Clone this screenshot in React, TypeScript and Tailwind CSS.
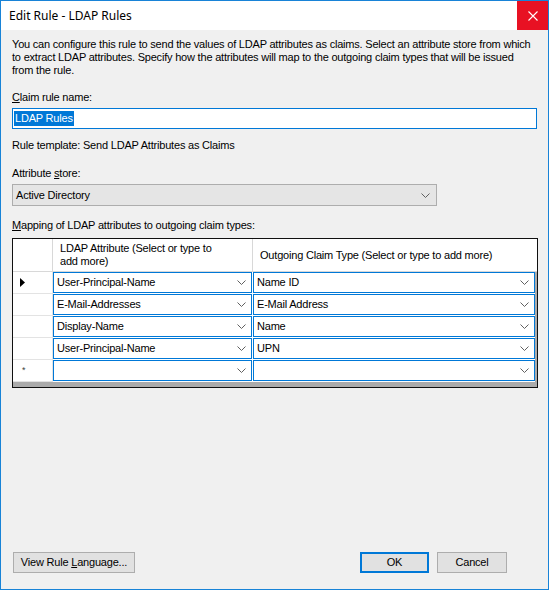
import React from "react";

const rows = [
  { attr: "User-Principal-Name", claim: "Name ID", marker: "arrow" },
  { attr: "E-Mail-Addresses", claim: "E-Mail Address", marker: "" },
  { attr: "Display-Name", claim: "Name", marker: "" },
  { attr: "User-Principal-Name", claim: "UPN", marker: "" },
  { attr: "", claim: "", marker: "star" },
];

function Chevron() {
  return (
    <svg width="9" height="5" viewBox="0 0 9 5" className="shrink-0">
      <polyline points="0.5,0.5 4.5,4.5 8.5,0.5" fill="none" stroke="#606060" strokeWidth="1" />
    </svg>
  );
}

function CellCombo({ value, width }: { value: string; width: string }) {
  return (
    <div className={`${width} h-[21px] border border-[#0078d7] bg-white flex items-center pl-[3px] pr-[5px]`}>
      <span className="flex-1 truncate">{value}</span>
      <Chevron />
    </div>
  );
}

export default function App() {
  return (
    <div
      className="w-[549px] h-[590px] border border-[#1883d7] bg-[#f0f0f0] flex flex-col text-[11px] text-black"
      style={{ fontFamily: '"Liberation Sans", Arial, sans-serif' }}
    >
      {/* title bar */}
      <div className="h-[29px] bg-white flex items-center shrink-0">
        <span className="pl-[8px] flex-1 text-[12px]" style={{ fontFamily: '"Noto Sans", sans-serif' }}>
          Edit Rule - LDAP Rules
        </span>
        <div className="w-[31px] h-[29px] bg-[#e81123] flex items-center justify-center">
          <svg width="10" height="10" viewBox="0 0 10 10">
            <path d="M0.5 0.5 L9.5 9.5 M9.5 0.5 L0.5 9.5" stroke="white" strokeWidth="1.1" />
          </svg>
        </div>
      </div>

      {/* body */}
      <div className="flex-1 flex flex-col px-[11px] leading-[13px] tracking-[-0.2px]">
        <p className="mt-[8px] whitespace-nowrap">
          You can configure this rule to send the values of LDAP attributes as claims. Select an attribute store from which
          <br />
          to extract LDAP attributes. Specify how the attributes will map to the outgoing claim types that will be issued
          <br />
          from the rule.
        </p>

        <div className="mt-[14px]">
          <span className="underline">C</span>laim rule name:
        </div>
        <div className="mt-[4px] w-[525px] h-[21px] border border-[#0078d7] bg-white flex items-center pl-[1px]">
          <span className="bg-[#0078d7] text-white px-[1px] leading-[15px]">LDAP Rules</span>
        </div>

        <div className="mt-[10px]">Rule template: Send LDAP Attributes as Claims</div>

        <div className="mt-[15px]">
          Attribute <span className="underline">s</span>tore:
        </div>
        <div className="mt-[4px] w-[425px] h-[22px] border border-[#adadad] bg-[#e5e5e5] flex items-center pl-[3px] pr-[6px]">
          <span className="flex-1">Active Directory</span>
          <Chevron />
        </div>

        <div className="mt-[13px]">
          <span className="underline">M</span>apping of LDAP attributes to outgoing claim types:
        </div>

        {/* grid */}
        <div className="mt-[6px] w-[526px] h-[150px] border border-[#101010] bg-[#ababab] flex flex-col">
          <div className="h-[33px] bg-white flex border-b border-[#d8d8d8]">
            <div className="w-[40px] border-r border-[#d8d8d8]" />
            <div className="w-[200px] border-r border-[#d8d8d8] pl-[7px] flex items-center">
              LDAP Attribute (Select or type to
              <br />
              add more)
            </div>
            <div className="flex-1 pl-[7px] flex items-center">Outgoing Claim Type (Select or type to add more)</div>
          </div>
          {rows.map((r, i) => (
            <div key={i} className="h-[22px] flex bg-white w-[522px]">
              <div className="w-[41px] border-r border-b border-[#e3e3e3] flex items-center pl-[7px]">
                {r.marker === "arrow" && (
                  <svg width="5" height="9" viewBox="0 0 5 9">
                    <path d="M0 0 L5 4.5 L0 9 Z" fill="#000" />
                  </svg>
                )}
                {r.marker === "star" && <span className="text-[9px] text-[#404040] pl-[2px] leading-none">*</span>}
              </div>
              <div className="flex gap-[1px] border-b border-white">
                <CellCombo value={r.attr} width="w-[199px]" />
                <CellCombo value={r.claim} width="w-[282px]" />
              </div>
            </div>
          ))}
        </div>

        <div className="flex-1" />

        {/* buttons */}
        <div className="flex items-center mb-[16px]">
          <button className="w-[122px] h-[21px] border border-[#adadad] bg-[#e1e1e1] ml-[1px]">
            View Rule <span className="underline">L</span>anguage...
          </button>
          <div className="flex-1" />
          <button className="w-[69px] h-[21px] border-2 border-[#0078d7] bg-[#e1e1e1]">OK</button>
          <button className="w-[70px] h-[21px] border border-[#adadad] bg-[#e1e1e1] ml-[8px] mr-[30px]">Cancel</button>
        </div>
      </div>
    </div>
  );
}
